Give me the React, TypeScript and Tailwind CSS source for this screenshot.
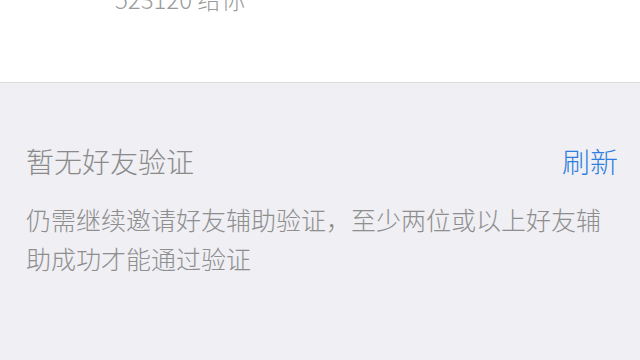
export default function App() {
  const font = { fontFamily: '"Noto Sans CJK SC", "Noto Sans", sans-serif' };
  return (
    <div className="w-[640px] h-[360px] overflow-hidden bg-[#efeff4] font-light" style={font}>
      <div className="h-[83px] bg-white border-b border-[#dcdcdc] overflow-hidden">
        <div className="pl-[115px] -mt-[13px] text-[24px] leading-[24px] text-[#9a9a9a]">523120 给你</div>
      </div>
      <div className="pt-[64px] pl-[26px] pr-[22px]">
        <div className="flex justify-between items-center text-[28px] leading-[28px]">
          <span className="text-[#8a8a8a]">暂无好友验证</span>
          <span className="text-[#2f7fe0]">刷新</span>
        </div>
        <p className="mt-[25px] pr-[14px] text-[25px] leading-[39px] text-[#8e8e8e]">
          仍需继续邀请好友辅助验证，至少两位或以上好友辅助成功才能通过验证
        </p>
      </div>
    </div>
  );
}
